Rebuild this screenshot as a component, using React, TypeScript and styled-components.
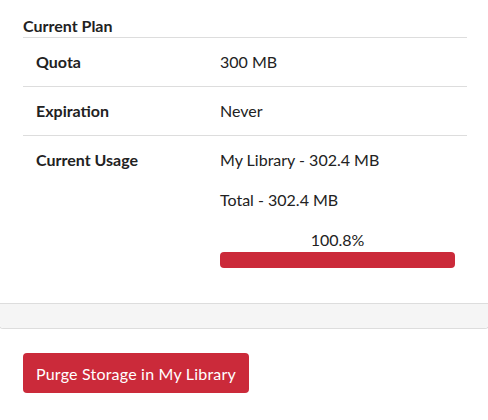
import styled, { createGlobalStyle } from 'styled-components';

const GlobalStyle = createGlobalStyle`
  body {
    margin: 0;
    background: #fff;
    font-family: Lato, "Open Sans", sans-serif;
    color: #222;
  }
`;

const Card = styled.section`
  margin: 0 -1px;
  border: 1px solid #ddd;
  border-top: none;
  border-radius: 0 0 4px 4px;
`;

const CardBody = styled.div`
  padding: 16px 21px 23px 23px;
`;

const Heading = styled.h3`
  margin: 0 0 1px;
  font-size: 16px;
  line-height: 20px;
  font-weight: 700;
`;

const Row = styled.div`
  display: grid;
  grid-template-columns: 197px 1fr;
  border-top: 1px solid #ddd;
  font-size: 16px;
  line-height: 24px;
`;

const Label = styled.div`
  padding: 12px 13px;
  font-weight: 700;
`;

const Value = styled.div`
  padding: 12px 12px 12px 0;
  display: flex;
  flex-direction: column;
  gap: 16px;
`;

const Line = styled.div``;

const Progress = styled.div`
  display: flex;
  flex-direction: column;
`;

const Percent = styled.div`
  text-align: center;
`;

const Track = styled.div`
  height: 16px;
  background: #e9ecef;
  border-radius: 4px;
  overflow: hidden;
`;

const Fill = styled.div`
  height: 100%;
  background: #cb2a3a;
`;

const Footer = styled.div`
  height: 24px;
  background: #f5f5f5;
  border-top: 1px solid #ddd;
  border-radius: 0 0 4px 4px;
`;

const Actions = styled.div`
  padding: 24px 23px;
`;

const DangerButton = styled.button`
  height: 40px;
  padding: 0 13px;
  background: #cb2a3a;
  color: #fff;
  border: none;
  border-radius: 4px;
  font-family: Lato, "Open Sans", sans-serif;
  font-size: 16px;
  letter-spacing: 0.2px;
  cursor: pointer;
`;

const usage = 100.8;

export default function App() {
  return (
    <>
      <GlobalStyle />
      <Card>
        <CardBody>
          <Heading>Current Plan</Heading>
          <Row>
            <Label>Quota</Label>
            <Value>
              <Line>300 MB</Line>
            </Value>
          </Row>
          <Row>
            <Label>Expiration</Label>
            <Value>
              <Line>Never</Line>
            </Value>
          </Row>
          <Row>
            <Label>Current Usage</Label>
            <Value>
              <Line>My Library - 302.4 MB</Line>
              <Line>Total - 302.4 MB</Line>
              <Progress>
                <Percent>{usage}%</Percent>
                <Track>
                  <Fill style={{ width: `${Math.min(usage, 100)}%` }} />
                </Track>
              </Progress>
            </Value>
          </Row>
        </CardBody>
        <Footer />
      </Card>
      <Actions>
        <DangerButton>Purge Storage in My Library</DangerButton>
      </Actions>
    </>
  );
}
